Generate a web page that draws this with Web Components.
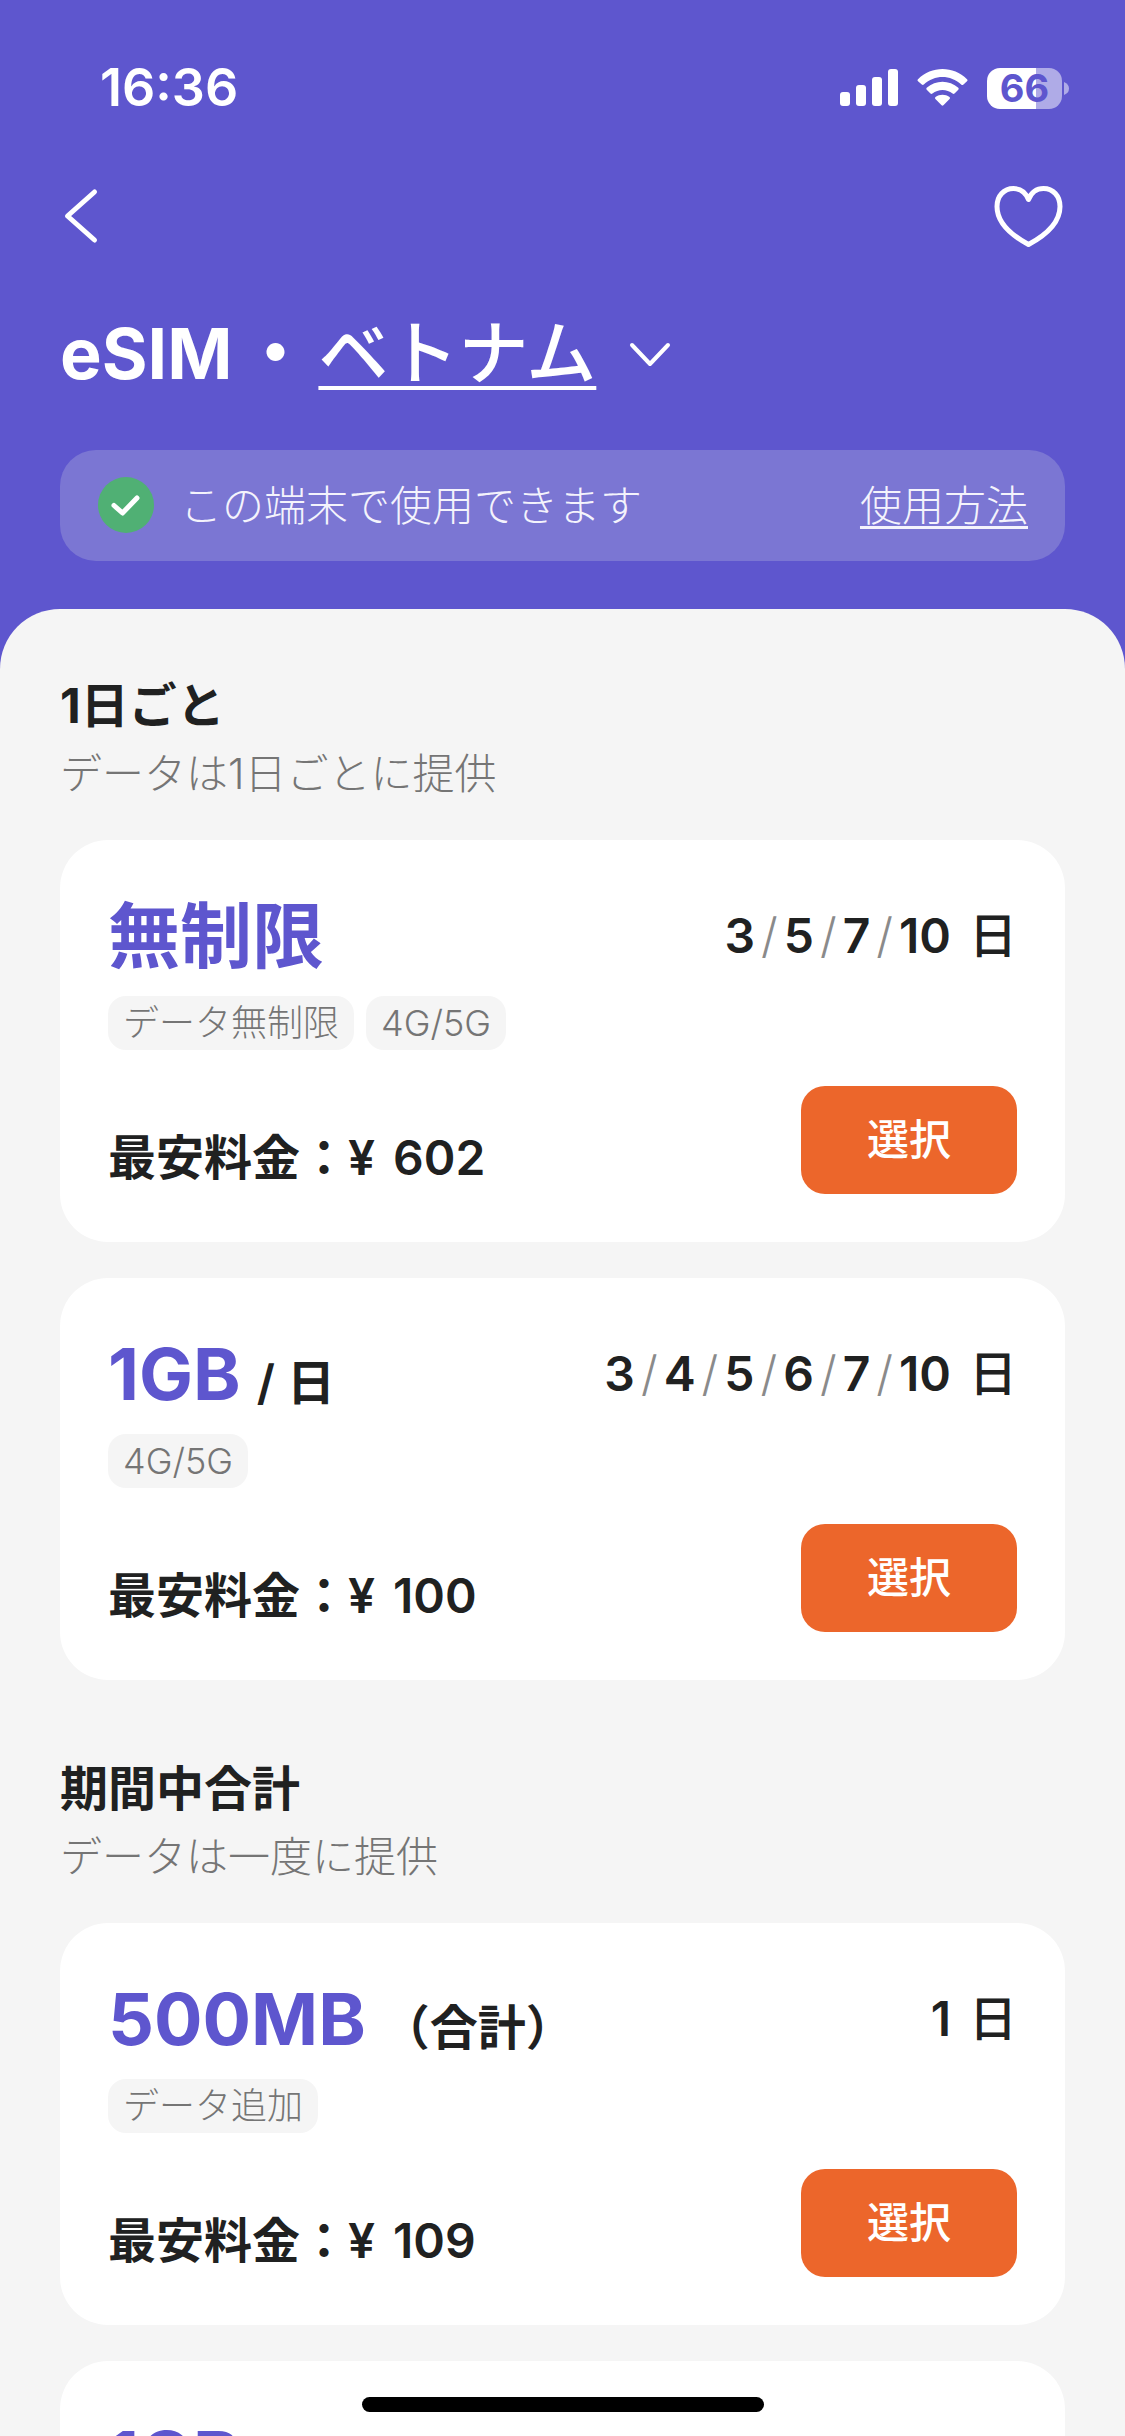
<!DOCTYPE html>
<html lang="ja">
<head>
<meta charset="utf-8">
<meta name="viewport" content="width=device-width, initial-scale=1">
<title>eSIM・ベトナム</title>
<style>
  :root {
    --brand: #5e56ce;
    --accent: #ec662b;
    --ink: #202121;
    --muted: #757575;
    --surface: #f5f5f5;
    --gutter: 60px;
  }
  body {
    margin: 0;
    font-family: Inter, "Noto Sans CJK JP", sans-serif;
    color: var(--ink);
    background: var(--brand);
  }
</style>
</head>
<body>
<esim-app>
  <status-bar slot="header" time="16:36" battery="66"></status-bar>
  <nav-bar slot="header"></nav-bar>
  <page-title slot="header" product="eSIM">ベトナム</page-title>
  <device-notice slot="header">この端末で使用できます<span slot="action">使用方法</span></device-notice>

  <plan-section>
    <span slot="heading">1日ごと</span>
    <span slot="note">データは1日ごとに提供</span>
    <plan-card days="3,5,7,10" price="602">無制限<plan-tag slot="tag">データ無制限</plan-tag><plan-tag slot="tag">4G/5G</plan-tag></plan-card>
    <plan-card days="3,4,5,6,7,10" price="100">1GB<span slot="unit">/ 日</span><plan-tag slot="tag">4G/5G</plan-tag></plan-card>
  </plan-section>
  <plan-section>
    <span slot="heading">期間中合計</span>
    <span slot="note">データは一度に提供</span>
    <plan-card days="1" price="109">500MB<span slot="unit">（合計）</span><plan-tag slot="tag">データ追加</plan-tag></plan-card>
    <plan-card>1GB</plan-card>
  </plan-section>
</esim-app>

<script>
  const define = (name, render) => customElements.define(name, class extends HTMLElement {
    constructor() {
      super();
      this.attachShadow({ mode: 'open' });
    }
    connectedCallback() {
      this.shadowRoot.innerHTML = render(this);
    }
  });

  define('esim-app', () => `
    <style>
      :host { display: flex; flex-direction: column; height: 100vh; overflow: hidden; position: relative; background: var(--brand); }
      header { flex: none; padding-bottom: 48px; color: #fff; }
      main { flex: 1; min-height: 0; overflow: hidden; box-sizing: border-box; display: flex; flex-direction: column; gap: 79px;
             padding: 67px var(--gutter) 0; border-radius: 60px 60px 0 0; background: var(--surface); }
      .home { position: absolute; left: 50%; bottom: 24px; width: 402px; height: 15px; margin-left: -201px; border-radius: 8px; background: #000; }
    </style>
    <header><slot name="header"></slot></header>
    <main><slot></slot></main>
    <div class="home"></div>`);

  define('status-bar', (el) => `
    <style>
      :host { display: flex; align-items: center; justify-content: space-between; height: 124px; padding: 26px 56px 0 100px; }
      time { font-size: 52px; line-height: 60px; font-weight: 600; }
      .icons { display: flex; align-items: center; gap: 19px; }
      .battery { display: flex; align-items: center; gap: 2px; }
      .level { width: 75px; height: 41px; border-radius: 13px; text-align: center; font-size: 38px; line-height: 41px; font-weight: 700;
               color: var(--brand); background: linear-gradient(90deg, #fff 66%, #afabe7 66%); }
      svg { display: block; }
    </style>
    <time>${el.getAttribute('time')}</time>
    <div class="icons">
      <svg width="58" height="38" viewBox="0 0 58 38" fill="#fff">
        <rect x="0" y="23" width="10" height="14" rx="3"/><rect x="16" y="16" width="10" height="21" rx="3"/>
        <rect x="32" y="8" width="10" height="29" rx="3"/><rect x="48" y="0" width="10" height="37" rx="3"/>
      </svg>
      <svg width="51" height="38" viewBox="0 0 51 38" fill="#fff">
        <path d="M1 10.2C14.500-3.400 36.500-3.400 50 10.200Q51 11.200 50 12.200L46.200 15.800Q45.200 16.500 44.200 15.600C33.500 5.600 17.500 5.600 6.800 15.600Q5.800 16.500 4.800 15.600L1 12.200Q0 11.200 1 10.200Z"/>
        <path d="M9.700 18.800C18.600 10.800 32.400 10.800 41.300 18.800Q42.200 19.700 41.300 20.700L37.500 24.600Q36.600 25.400 35.600 24.600C29.800 19.700 21.200 19.700 15.400 24.600Q14.400 25.400 13.500 24.600L9.700 20.700Q8.800 19.700 9.700 18.800Z"/>
        <path d="M18.500 28C22.600 25.100 28.400 25.100 32.500 28Q33.600 29 32.600 30L26.400 36.300Q25.500 37.200 24.600 36.300L18.400 30Q17.400 29 18.500 28Z"/>
      </svg>
      <div class="battery">
        <div class="level">${el.getAttribute('battery')}</div>
        <svg width="5" height="13" viewBox="0 0 5 13"><path d="M0 0Q5 2 5 6.500T0 13Z" fill="#afabe7"/></svg>
      </div>
    </div>`);

  define('nav-bar', () => `
    <style>
      :host { display: flex; align-items: center; justify-content: space-between; height: 132px; padding: 0 var(--gutter); }
      button { display: block; margin: 0; padding: 0; border: 0; background: none; color: inherit; }
      svg { display: block; fill: none; stroke: currentColor; stroke-linecap: round; stroke-linejoin: round; }
    </style>
    <button type="button" aria-label="戻る">
      <svg width="42" height="56" viewBox="0 0 42 56" stroke-width="5"><path d="M34.500 4L7.500 28L34.500 52"/></svg>
    </button>
    <button type="button" aria-label="お気に入り">
      <svg width="71" height="64" viewBox="0 0 71 64" stroke-width="5">
        <path d="M34.500 15.500C31.500 8 25.500 4.500 19.500 4.500C10 4.500 3 12 3 22.500C3 38 15 50 34.500 60.500C54 50 66 38 66 22.500C66 12 59 4.500 49.500 4.500C43.500 4.500 37.500 8 34.500 15.500Z"/>
      </svg>
    </button>`);

  define('page-title', (el) => `
    <style>
      :host { display: block; padding: 24px var(--gutter) 48px; }
      h1 { display: flex; align-items: center; gap: 8px; margin: 0; font-size: 70px; line-height: 96px; font-weight: 700; }
      button { display: flex; align-items: center; gap: 32px; margin: 0; padding: 0; border: 0; background: none; color: inherit; font: inherit; font-weight: 500; }
      .country { text-decoration: underline 4px; text-underline-offset: 7px; text-decoration-skip-ink: none; }
      svg { display: block; fill: none; stroke: currentColor; stroke-width: 4; stroke-linecap: round; stroke-linejoin: round; }
    </style>
    <h1><span>${el.getAttribute('product')}</span><span>・</span><button type="button" aria-haspopup="listbox"><span class="country"><slot></slot></span>
      <svg width="44" height="28" viewBox="0 0 44 28"><path d="M4 5L22 24L40 5"/></svg></button></h1>`);

  define('device-notice', () => `
    <style>
      :host { display: flex; align-items: center; gap: 25px; height: 111px; margin: 0 var(--gutter); padding: 0 37px; border-radius: 36px;
              background: #7b76d3; color: #f4f3fc; font-size: 42px; line-height: 60px; font-weight: 300; }
      svg { flex: none; display: block; }
      p { flex: 1; margin: 0; }
      a { color: inherit; text-decoration: underline 3px; text-underline-offset: 5px; text-decoration-skip-ink: none; }
    </style>
    <svg width="58" height="58" viewBox="0 0 58 58"><circle cx="29" cy="28" r="28" fill="#50b074"/>
      <path d="M17 28.500L25.500 36L40 21" fill="none" stroke="#fff" stroke-width="5" stroke-linecap="round" stroke-linejoin="round"/></svg>
    <p><slot></slot></p>
    <a href="#usage"><slot name="action"></slot></a>`);

  define('plan-section', () => `
    <style>
      :host { display: block; flex: none; }
      h2 { margin: 0; font-size: 48px; line-height: 60px; font-weight: 700; }
      p { margin: 8px 0 36px; font-size: 42px; line-height: 60px; font-weight: 300; color: var(--muted); }
      .cards { display: flex; flex-direction: column; gap: 36px; }
    </style>
    <h2><slot name="heading"></slot></h2>
    <p><slot name="note"></slot></p>
    <div class="cards"><slot></slot></div>`);

  define('plan-tag', () => `
    <style>
      :host { display: block; padding: 0 15px; border-radius: 18px; background: var(--surface); color: var(--muted);
              font-size: 36px; line-height: 54px; font-weight: 300; }
    </style><slot></slot>`);

  define('plan-card', (el) => {
    const days = el.getAttribute('days');
    const price = el.getAttribute('price');
    return `
    <style>
      :host { display: flex; flex-direction: column; padding: 48px; border-radius: 48px; background: #fff; }
      .top, .bottom { display: flex; justify-content: space-between; }
      .top { align-items: center; }
      .bottom { align-items: flex-end; margin-top: 36px; }
      h3 { display: flex; align-items: baseline; gap: 16px; margin: 0; font-size: 72px; line-height: 96px; font-weight: 700; color: var(--brand); }
      .unit, .days, .price { font-size: 48px; line-height: 60px; font-weight: 600; color: var(--ink); }
      .days, .price { display: flex; margin: 0; }
      .days { gap: 6px; }
      .days i { font-style: normal; font-weight: 300; color: #8a8a8a; }
      .days b { font-weight: 500; margin-left: 12px; }
      .tags { display: flex; gap: 12px; height: 54px; margin-top: 12px; }
      .price { gap: 18px; padding-bottom: 6px; }
      button { width: 216px; height: 108px; margin: 0; padding: 0; border: 0; border-radius: 24px; background: var(--accent); color: #fff;
               font: inherit; font-size: 42px; line-height: 60px; font-weight: 500; }
    </style>
    <div class="top">
      <h3><span><slot></slot></span><span class="unit"><slot name="unit"></slot></span></h3>
      ${days ? `<p class="days">${days.split(',').map((d) => `<span>${d}</span>`).join('<i>/</i>')}<b>日</b></p>` : ''}
    </div>
    <div class="tags"><slot name="tag"></slot></div>
    ${price ? `<div class="bottom"><p class="price"><span>最安料金：¥</span><span>${price}</span></p><button type="button">選択</button></div>` : ''}`;
  });
</script>
</body>
</html>
